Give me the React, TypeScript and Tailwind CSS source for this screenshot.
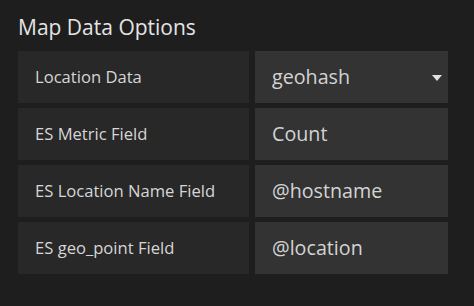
const ROWS = [
  { label: "Location Data", value: "geohash", select: true },
  { label: "ES Metric Field", value: "Count" },
  { label: "ES Location Name Field", value: "@hostname" },
  { label: "ES geo_point Field", value: "@location" },
];

export default function App() {
  return (
    <div
      className="w-[474px] h-[306px] bg-[#1f1e1f] pl-[18px] pt-[12px]"
      style={{ fontFamily: '"Open Sans", "Noto Sans", sans-serif' }}
    >
      <h2 className="text-[21px] leading-[30px] text-[#e4e4e4] mb-[9px]">
        Map Data Options
      </h2>
      <div className="flex flex-col gap-[5px]">
        {ROWS.map((r) => (
          <div key={r.label} className="flex gap-[6px] h-[52px]">
            <div className="w-[231px] bg-[#282828] flex items-center pl-[17px] text-[16.6px] text-[#d6d6d6]">
              {r.label}
            </div>
            <div className="w-[193px] bg-[#333333] flex items-center pl-[17px] pr-[6px] text-[19.7px] text-[#d4d4d4]">
              <span className="flex-1">{r.value}</span>
              {r.select && (
                <svg width="10" height="6" viewBox="0 0 10 6" className="mt-[2px]">
                  <path d="M0 0h10L5 6z" fill="#e0e0e0" />
                </svg>
              )}
            </div>
          </div>
        ))}
      </div>
    </div>
  );
}
